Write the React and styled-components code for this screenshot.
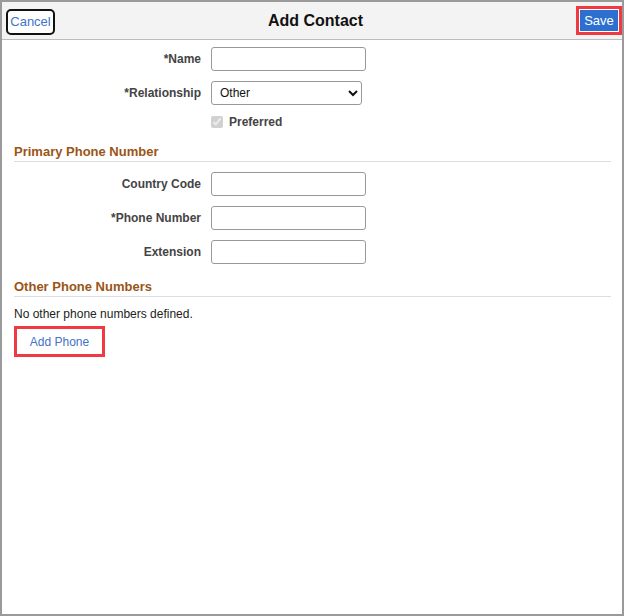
import React from 'react';
import styled, { createGlobalStyle } from 'styled-components';

const GlobalStyle = createGlobalStyle`
  html, body {
    margin: 0;
    padding: 0;
    background: #ffffff;
  }
  body {
    font-family: 'Liberation Sans', Arial, sans-serif;
    color: #333333;
  }
`;

const Frame = styled.div`
  box-sizing: border-box;
  width: 624px;
  height: 616px;
  border: 2px solid #9a9a9a;
  background: #ffffff;
  display: flex;
  flex-direction: column;
`;

const Header = styled.header`
  box-sizing: border-box;
  height: 38px;
  background: #f3f3f3;
  border-bottom: 1px solid #bdbdbd;
  display: flex;
  align-items: center;
  padding: 0 0 0 4px;
`;

const CancelButton = styled.button`
  box-sizing: border-box;
  width: 49px;
  height: 26px;
  margin-top: 2px;
  border: 2px solid #111111;
  border-radius: 5px;
  background: #ffffff;
  color: #3f73c9;
  font-family: 'Liberation Sans', Arial, sans-serif;
  font-size: 13px;
  padding: 0;
  cursor: pointer;
`;

const Title = styled.h1`
  flex: 1;
  margin: 0;
  text-align: center;
  font-size: 16px;
  font-weight: bold;
  color: #111111;
`;

const Highlight = styled.div`
  box-sizing: border-box;
  display: inline-flex;
  border: 3px solid #ef3a42;
  padding: 1px;
  background: #ffffff;
`;

const SaveButton = styled.button`
  box-sizing: border-box;
  width: 38px;
  height: 21px;
  border: none;
  background: #2d6fcf;
  color: #ffffff;
  font-family: 'Liberation Sans', Arial, sans-serif;
  font-size: 13px;
  padding: 0;
  cursor: pointer;
`;

const Content = styled.main`
  padding: 7px 11px 0 12px;
`;

const FieldGrid = styled.div`
  display: grid;
  grid-template-columns: 187px auto;
  column-gap: 10px;
  row-gap: 10px;
  align-items: center;
  margin-top: ${(p) => p.top || 0}px;
`;

const Label = styled.label`
  text-align: right;
  font-size: 12px;
  font-weight: bold;
  color: #444444;
`;

const TextInput = styled.input`
  box-sizing: border-box;
  width: 155px;
  height: 24px;
  border: 1px solid #999999;
  border-radius: 3px;
  background: #ffffff;
  font-family: 'Liberation Sans', Arial, sans-serif;
  font-size: 12px;
`;

const Select = styled.select`
  box-sizing: border-box;
  width: 151px;
  height: 24px;
  border: 1px solid #999999;
  border-radius: 3px;
  background: #ffffff;
  font-family: 'Liberation Sans', Arial, sans-serif;
  font-size: 12px;
  color: #111111;
  padding-left: 4px;
`;

const CheckRow = styled.label`
  display: flex;
  align-items: center;
  gap: 6px;
  font-size: 12px;
  font-weight: bold;
  color: #444444;
  height: 13px;
`;

const Check = styled.input`
  margin: 0;
  width: 12px;
  height: 12px;
`;

const SectionTitle = styled.h2`
  margin: ${(p) => p.top}px 0 0 0;
  padding-bottom: 1px;
  border-bottom: 1px solid #dadde1;
  font-size: 13px;
  line-height: 16px;
  font-weight: bold;
  color: #9b5516;
`;

const Note = styled.p`
  margin: 10px 0 0 0;
  font-size: 12px;
  line-height: 14px;
  color: #222222;
`;

const AddBox = styled(Highlight)`
  margin: 5px 0 0 0;
  padding: 0;
`;

const LinkButton = styled.button`
  width: 85px;
  height: 25px;
  border: none;
  background: #ffffff;
  color: #3f73c9;
  font-family: 'Liberation Sans', Arial, sans-serif;
  font-size: 12px;
  padding: 0;
  cursor: pointer;
`;

export default function App() {
  return (
    <>
      <GlobalStyle />
      <Frame>
        <Header>
          <CancelButton>Cancel</CancelButton>
          <Title>Add Contact</Title>
          <Highlight>
            <SaveButton>Save</SaveButton>
          </Highlight>
        </Header>
        <Content>
          <FieldGrid>
            <Label>*Name</Label>
            <TextInput />
            <Label>*Relationship</Label>
            <Select defaultValue="Other">
              <option>Other</option>
              <option>Spouse</option>
              <option>Parent</option>
            </Select>
            <span />
            <CheckRow>
              <Check type="checkbox" checked disabled readOnly />
              Preferred
            </CheckRow>
          </FieldGrid>

          <SectionTitle top={16}>Primary Phone Number</SectionTitle>
          <FieldGrid top={10}>
            <Label>Country Code</Label>
            <TextInput />
            <Label>*Phone Number</Label>
            <TextInput />
            <Label>Extension</Label>
            <TextInput />
          </FieldGrid>

          <SectionTitle top={15}>Other Phone Numbers</SectionTitle>
          <Note>No other phone numbers defined.</Note>
          <AddBox>
            <LinkButton>Add Phone</LinkButton>
          </AddBox>
        </Content>
      </Frame>
    </>
  );
}
